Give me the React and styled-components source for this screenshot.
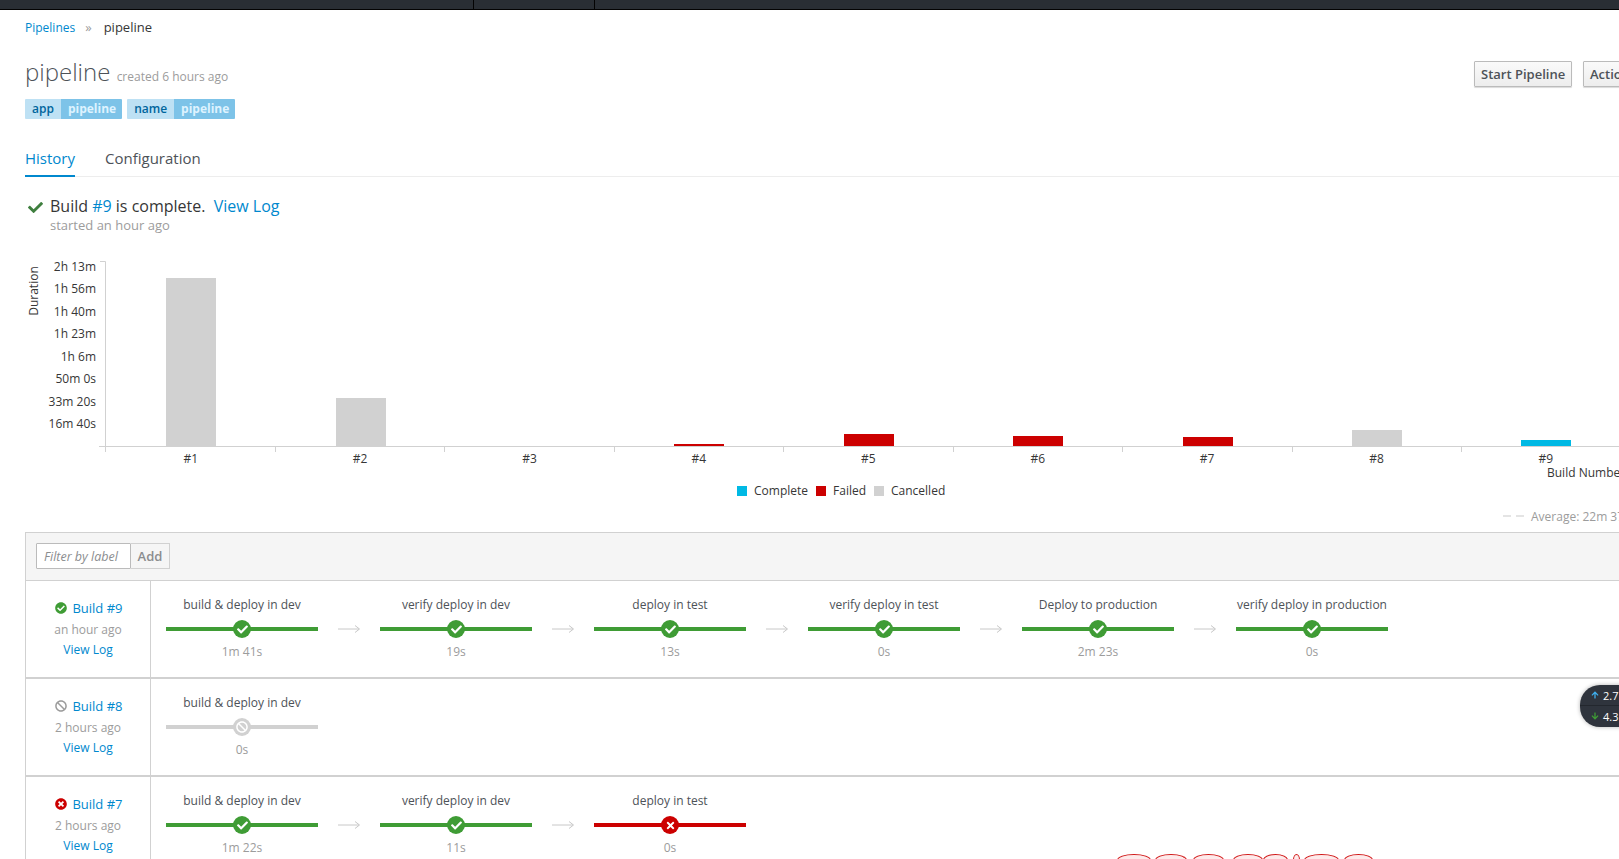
import React from "react";
import styled, { createGlobalStyle } from "styled-components";
import { FaCheck, FaCheckCircle, FaTimes, FaTimesCircle, FaBan, FaArrowUp, FaArrowDown } from "react-icons/fa";

const Global = createGlobalStyle`
    html, body {
        margin: 0;
        height: 859px;
        overflow: hidden;
        background: #fff;
    }
    body {
        font-family: "Open Sans", "Liberation Sans", sans-serif;
        font-size: 12px;
        color: #363636;
    }
    a {
        color: #0088ce;
        text-decoration: none;
    }
`;

const Page = styled.div`
    position: relative;
    width: 1619px;
    height: 859px;
    overflow: hidden;
`;

const TopBar = styled.div`
    display: flex;
    height: 9px;
    background: #292e34;
    border-bottom: 1px solid #030303;
`;

const TopCell = styled.div`
    width: ${p => p.$w}px;
    flex: none;
    border-right: ${p => (p.$line ? "1px solid #030303" : "none")};
`;

const Content = styled.div`
    width: 1720px;
    padding: 0 0 0 25px;
`;

const Crumbs = styled.div`
    display: flex;
    align-items: center;
    height: 20px;
    margin-top: 7px;
    gap: 10px;
`;

const CrumbSep = styled.span`
    color: #9c9c9c;
    font-size: 13px;
    margin-right: 2px;
`;

const CrumbCurrent = styled.span`
    font-size: 13px;
`;

const Head = styled.div`
    display: flex;
    justify-content: space-between;
    width: 1658px;
    margin-top: 19px;
`;

const Title = styled.h1`
    margin: 0;
    font-size: 24px;
    line-height: 32px;
    font-weight: 300;
    color: #4d5258;

    small {
        font-size: 12px;
        font-weight: 400;
        color: #9c9c9c;
    }
`;

const Actions = styled.div`
    display: flex;
    gap: 11px;
    margin-top: 5px;
`;

const Button = styled.button`
    height: 26px;
    width: ${p => p.$w}px;
    padding: 0 6px;
    text-align: left;
    font: 600 13px "Open Sans", sans-serif;
    color: #4d5258;
    background: linear-gradient(#fafafa, #ededed);
    border: 1px solid #bbb;
    border-radius: 1px;
    box-shadow: 0 1px 1px rgba(3, 3, 3, 0.15);
    white-space: nowrap;
`;

const Labels = styled.div`
    display: flex;
    gap: 5px;
    margin-top: 6px;
`;

const Label = styled.div`
    display: flex;
    height: 20px;
    line-height: 20px;
    font-weight: 600;
    font-size: 12px;
    border-radius: 1px;
    overflow: hidden;
`;

const LabelKey = styled.span`
    padding: 0 7px;
    background: #bee1f4;
    color: #00659c;
`;

const LabelValue = styled.span`
    padding: 0 6px 0 7px;
    font-weight: 700;
    background: #7dc3e8;
    color: #def3ff;
`;

const Tabs = styled.div`
    display: flex;
    gap: 30px;
    margin: 26px 0 0 0;
    border-bottom: 1px solid #ededed;
`;

const Tab = styled.div`
    height: 30px;
    line-height: 26px;
    font-size: 15px;
    color: ${p => (p.$active ? "#0088ce" : "#4d5258")};
    border-bottom: 2px solid ${p => (p.$active ? "#0088ce" : "transparent")};
    margin-bottom: -1px;
`;

const Status = styled.div`
    display: flex;
    align-items: flex-start;
    gap: 7px;
    margin: 19px 0 0 3px;
`;

const StatusIcon = styled(FaCheck)`
    flex: none;
    color: #3f7f3f;
    font-size: 15px;
    margin-top: 4px;
`;

const StatusLine = styled.div`
    font-size: 16px;
    line-height: 20px;
    white-space: pre;
`;

const StatusSub = styled.div`
    font-size: 13px;
    line-height: 18px;
    color: #9c9c9c;
`;

const ChartBox = styled.svg`
    display: block;
    margin: 16px 0 0 -25px;
    width: 1619px;
    height: 231px;

    text {
        font-family: "Open Sans", sans-serif;
        font-size: 12px;
        fill: #363636;
    }
`;

const Legend = styled.div`
    display: flex;
    width: 1619px;
    margin-left: -25px;
    height: 20px;
    padding-left: 737px;
    box-sizing: border-box;
    gap: 8px;
`;

const LegendItem = styled.div`
    display: flex;
    align-items: center;
    gap: 7px;
    line-height: 20px;
`;

const Swatch = styled.span`
    width: 10px;
    height: 10px;
    background: ${p => p.$color};
`;

const Average = styled.div`
    display: flex;
    align-items: center;
    gap: 7px;
    margin: 5px 0 0 1478px;
    height: 20px;
    color: #9c9c9c;
    white-space: nowrap;
`;

const AvgDash = styled.span`
    width: 21px;
    height: 2px;
    background: repeating-linear-gradient(90deg, #e4e4e4 0 8px, transparent 8px 13px);
`;

const Panel = styled.div`
    width: 1680px;
    margin-top: 6px;
    border: 1px solid #d1d1d1;
    border-bottom: none;
`;

const FilterBar = styled.div`
    display: flex;
    align-items: center;
    box-sizing: border-box;
    height: 48px;
    padding: 0 0 2px 10px;
    background: #f5f5f5;
    border-bottom: 1px solid #d1d1d1;
`;

const FilterInput = styled.div`
    box-sizing: border-box;
    width: 95px;
    height: 26px;
    line-height: 25px;
    padding-left: 7px;
    font-size: 12.5px;
    font-style: italic;
    color: #8b8d8f;
    background: #fff;
    border: 1px solid #bbb;
    border-radius: 1px;
`;

const AddButton = styled.div`
    box-sizing: border-box;
    width: 39px;
    height: 26px;
    line-height: 24px;
    text-align: center;
    font-size: 13px;
    font-weight: 600;
    color: #8b8d8f;
    background: #f5f5f5;
    border: 1px solid #d1d1d1;
    border-left: none;
`;

const Row = styled.div`
    display: flex;
    height: 96px;
    border-bottom: 2px solid #d1d1d1;
`;

const BuildCell = styled.div`
    flex: none;
    width: 124px;
    border-right: 1px solid #d1d1d1;
    text-align: center;
    padding-top: 15px;
    line-height: 20px;
`;

const BuildName = styled.div`
    display: flex;
    justify-content: center;
    align-items: center;
    gap: 5px;
    padding-left: 2px;
    font-size: 13px;
    height: 24px;
`;

const BuildTime = styled.div`
    color: #9c9c9c;
    font-size: 12px;
`;

const Stages = styled.div`
    display: flex;
    padding: 13px 0 0 15px;
`;

const Stage = styled.div`
    width: 152px;
    text-align: center;
    flex: none;
`;

const StageName = styled.div`
    line-height: 22px;
    color: #4d5258;
    white-space: nowrap;
`;

const Track = styled.div`
    position: relative;
    display: flex;
    justify-content: center;
    align-items: center;
    height: 22px;
    margin-top: 2px;

    &::before {
        content: "";
        position: absolute;
        left: 0;
        right: 0;
        top: 9px;
        height: 4px;
        background: ${p => p.$color};
    }
`;

const Node = styled.span`
    position: relative;
    display: flex;
    align-items: center;
    justify-content: center;
    width: 18px;
    height: 18px;
    border-radius: 50%;
    color: #fff;
    font-size: 11px;
    background: ${p => p.$color};
`;

const CancelInner = styled(FaBan)`
    color: #fff;
    font-size: 12px;
`;

const Duration = styled.div`
    margin-top: 1px;
    line-height: 22px;
    color: #9c9c9c;
`;

const Arrow = styled.svg`
    flex: none;
    width: 62px;
    height: 12px;
    margin-top: 29px;
`;

const Speed = styled.div`
    position: absolute;
    left: 1580px;
    top: 685px;
    width: 70px;
    height: 42px;
    border-radius: 20px;
    background: #2f343d;
    box-shadow: 0 0 4px rgba(0, 0, 0, 0.3);
    color: #fff;
    font-size: 11px;
`;

const SpeedRow = styled.div`
    display: flex;
    align-items: center;
    gap: 4px;
    height: 20px;
    padding-left: 11px;
    border-top: ${p => (p.$line ? "1px solid #23272e" : "none")};
`;

const Scribble = styled.div`
    position: absolute;
    left: 1117px;
    top: 854px;
    display: flex;
`;

const ScribbleBit = styled.span`
    width: ${p => p.$w}px;
    height: 12px;
    margin-right: ${p => p.$gap}px;
    background: #fdeaea;
    border: 1px solid #d01818;
    border-bottom: none;
    border-radius: 50% 50% 0 0 / 6px 6px 0 0;
`;

const colors = { ok: "#3f9c35", fail: "#cc0000", cancel: "#d1d1d1" };

function stage(name, time, state = "ok") {
    return { name, time, state };
}

const builds = [
    {
        id: 9,
        state: "ok",
        ago: "an hour ago",
        stages: [
            stage("build & deploy in dev", "1m 41s"),
            stage("verify deploy in dev", "19s"),
            stage("deploy in test", "13s"),
            stage("verify deploy in test", "0s"),
            stage("Deploy to production", "2m 23s"),
            stage("verify deploy in production", "0s"),
        ],
    },
    {
        id: 8,
        state: "cancel",
        ago: "2 hours ago",
        stages: [stage("build & deploy in dev", "0s", "cancel")],
    },
    {
        id: 7,
        state: "fail",
        ago: "2 hours ago",
        stages: [
            stage("build & deploy in dev", "1m 22s"),
            stage("verify deploy in dev", "11s"),
            stage("deploy in test", "0s", "fail"),
        ],
    },
];

const yTicks = ["2h 13m", "1h 56m", "1h 40m", "1h 23m", "1h 6m", "50m 0s", "33m 20s", "16m 40s"];

const bars = [
    { h: 168, c: "#d1d1d1" },
    { h: 48, c: "#d1d1d1" },
    { h: 0, c: "#d1d1d1" },
    { h: 2, c: "#cc0000" },
    { h: 12, c: "#cc0000" },
    { h: 10, c: "#cc0000" },
    { h: 9, c: "#cc0000" },
    { h: 16, c: "#d1d1d1" },
    { h: 6, c: "#00b9e4" },
];

const scribbles = [[32, 4], [30, 6], [29, 9], [28, 0], [23, 5], [5, 4], [33, 5], [27, 0]];

// svg coordinates are the page y minus this
const CHART_TOP = 250;

function Chart() {
    const base = 446 - CHART_TOP;
    return (
        <ChartBox viewBox="0 0 1619 231">
            <text transform={`translate(38 ${291 - CHART_TOP}) rotate(-90)`} textAnchor="middle">Duration</text>
            {yTicks.map((t, i) => (
                <text key={t} x="96" y={271 + i * 22.45 - CHART_TOP} textAnchor="end">{t}</text>
            ))}
            <path d={`M100 ${261 - CHART_TOP}.5H105.5V${base}.5H1619`} fill="none" stroke="#d1d1d1" />
            <path d={`M99 ${base}.5H105`} stroke="#d1d1d1" />
            {bars.map((b, i) => {
                const x = 166.2 + i * 169.4;
                return (
                    <g key={i}>
                        <rect x={Math.round(x)} y={base - b.h} width="50" height={b.h} fill={b.c} />
                        <path d={`M${Math.round(105 + i * 169.5) + 0.5} ${base}V${base + 6}`} stroke="#d1d1d1" />
                        <text x={x + 24.5} y={463 - CHART_TOP} textAnchor="middle">#{i + 1}</text>
                    </g>
                );
            })}
            <text x="1547" y={477 - CHART_TOP}>Build Number</text>
        </ChartBox>
    );
}

function BuildIcon({ state }) {
    if (state === "ok") return <FaCheckCircle color={colors.ok} size={12} />;
    if (state === "fail") return <FaTimesCircle color={colors.fail} size={12} />;
    return <FaBan color="#9c9c9c" size={12} />;
}

function StageNode({ state }) {
    if (state === "cancel") return <Node $color={colors.cancel}><CancelInner /></Node>;
    return <Node $color={colors[state]}>{state === "ok" ? <FaCheck /> : <FaTimes />}</Node>;
}

export default function App() {
    return (
        <Page>
            <Global />
            <TopBar>
                <TopCell $w={473} $line />
                <TopCell $w={120} $line />
            </TopBar>
            <Content>
                <Crumbs>
                    <a href="#p">Pipelines</a>
                    <CrumbSep>»</CrumbSep>
                    <CrumbCurrent>pipeline</CrumbCurrent>
                </Crumbs>
                <Head>
                    <Title>pipeline <small>created 6 hours ago</small></Title>
                    <Actions>
                        <Button $w={98}>Start Pipeline</Button>
                        <Button $w={100}>Actions</Button>
                    </Actions>
                </Head>
                <Labels>
                    <Label><LabelKey>app</LabelKey><LabelValue>pipeline</LabelValue></Label>
                    <Label><LabelKey>name</LabelKey><LabelValue>pipeline</LabelValue></Label>
                </Labels>
                <Tabs>
                    <Tab $active>History</Tab>
                    <Tab>Configuration</Tab>
                </Tabs>
                <Status>
                    <StatusIcon />
                    <div>
                        <StatusLine>Build <a href="#b">#9</a> is complete.  <a href="#l">View Log</a></StatusLine>
                        <StatusSub>started an hour ago</StatusSub>
                    </div>
                </Status>
                <Chart />
                <Legend>
                    <LegendItem><Swatch $color="#00b9e4" />Complete</LegendItem>
                    <LegendItem><Swatch $color="#cc0000" />Failed</LegendItem>
                    <LegendItem><Swatch $color="#d1d1d1" />Cancelled</LegendItem>
                </Legend>
                <Average><AvgDash />Average: 22m 37s</Average>
                <Panel>
                    <FilterBar>
                        <FilterInput>Filter by label</FilterInput>
                        <AddButton>Add</AddButton>
                    </FilterBar>
                    {builds.map(b => (
                        <Row key={b.id}>
                            <BuildCell>
                                <BuildName><BuildIcon state={b.state} /><a href="#b">Build #{b.id}</a></BuildName>
                                <BuildTime>{b.ago}</BuildTime>
                                <a href="#l">View Log</a>
                            </BuildCell>
                            <Stages>
                                {b.stages.map((s, i) => (
                                    <React.Fragment key={s.name}>
                                        {i > 0 && (
                                            <Arrow viewBox="0 0 62 12">
                                                <path d="M20 6H41M37 2.5L41.5 6L37 9.5" fill="none" stroke="#c8c8c8" />
                                            </Arrow>
                                        )}
                                        <Stage>
                                            <StageName>{s.name}</StageName>
                                            <Track $color={colors[s.state]}><StageNode state={s.state} /></Track>
                                            <Duration>{s.time}</Duration>
                                        </Stage>
                                    </React.Fragment>
                                ))}
                            </Stages>
                        </Row>
                    ))}
                </Panel>
            </Content>
            <Speed>
                <SpeedRow><FaArrowUp color="#3fb0f0" size={8} />2.7 KB/s</SpeedRow>
                <SpeedRow $line><FaArrowDown color="#3f9c35" size={8} />4.3 KB/s</SpeedRow>
            </Speed>
            <Scribble>
                {scribbles.map(([w, gap], i) => <ScribbleBit key={i} $w={w} $gap={gap} />)}
            </Scribble>
        </Page>
    );
}
